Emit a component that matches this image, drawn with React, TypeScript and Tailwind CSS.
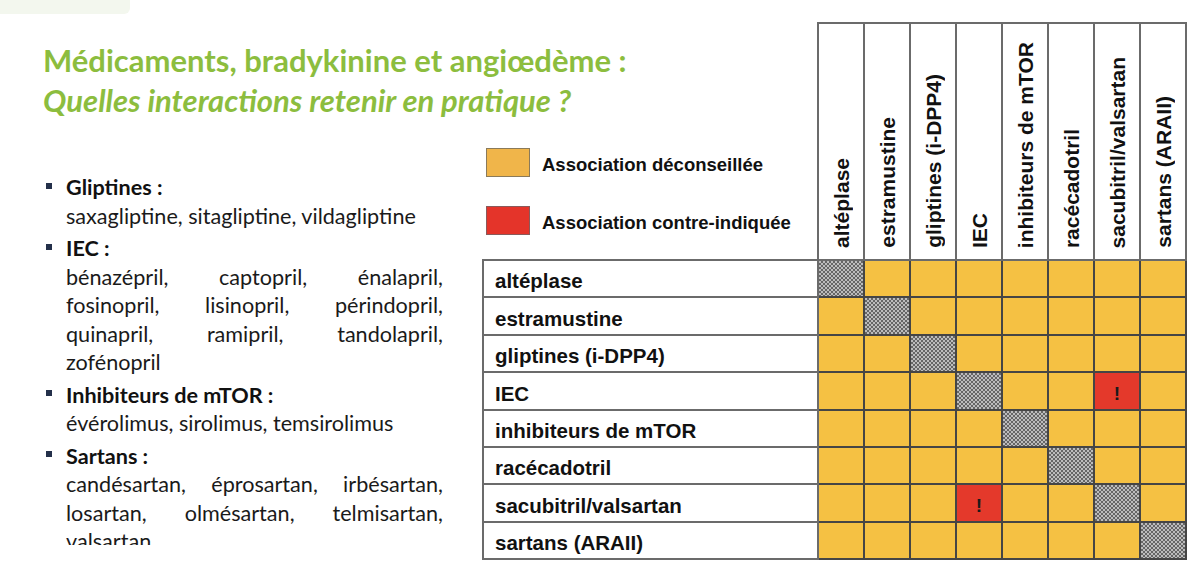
import React from "react";

const drugs = [
  "altéplase",
  "estramustine",
  "gliptines (i-DPP4)",
  "IEC",
  "inhibiteurs de mTOR",
  "racécadotril",
  "sacubitril/valsartan",
  "sartans (ARAII)",
];

const items: { h: string; lines: string[][] }[] = [
  { h: "Gliptines :", lines: [["saxagliptine, sitagliptine, vildagliptine"]] },
  {
    h: "IEC :",
    lines: [
      ["bénazépril,", "captopril,", "énalapril,"],
      ["fosinopril,", "lisinopril,", "périndopril,"],
      ["quinapril,", "ramipril,", "tandolapril,"],
      ["zofénopril"],
    ],
  },
  { h: "Inhibiteurs de mTOR :", lines: [["évérolimus, sirolimus, temsirolimus"]] },
  {
    h: "Sartans :",
    lines: [
      ["candésartan,", "éprosartan,", "irbésartan,"],
      ["losartan,", "olmésartan,", "telmisartan,"],
      ["valsartan"],
    ],
  },
];

function isRed(r: number, c: number) {
  return (r === 3 && c === 6) || (r === 6 && c === 3);
}

export default function App() {
  return (
    <div className="w-[1200px] h-[582px] bg-white flex overflow-hidden">
      {/* Left column */}
      <div className="w-[482px] shrink-0 flex flex-col font-['Lato',sans-serif]">
        <div className="h-[14px] w-[130px] bg-[#f3f7ee] rounded-br-[6px]" />
        <div className="mt-[26px] pl-[43px] whitespace-nowrap text-[#8cbd3e] font-bold text-[31px] leading-[40px]">
          <div>Médicaments, bradykinine et angiœdème :</div>
          <div className="italic">Quelles interactions retenir en pratique ?</div>
        </div>
        <div className="mt-[53px] ml-[46px] w-[397px] h-[372px] overflow-hidden text-[#1a1a1a] text-[21.6px]">
          {items.map((it, i) => (
            <div key={i} className={i === 0 ? "" : "mt-[4px]"}>
              <div className="flex items-center h-[28.5px] leading-[28.5px]">
                <span className="w-[6px] h-[6px] bg-[#24304a] mb-[3px] shrink-0" />
                <span className="ml-[14px] font-bold text-[#111]">{it.h}</span>
              </div>
              {it.lines.map((ln, j) => (
                <div
                  key={j}
                  className={
                    "ml-[20px] h-[28.5px] leading-[28.5px] whitespace-nowrap flex " +
                    (ln.length > 1 ? "justify-between" : "justify-start")
                  }
                >
                  {ln.map((w, k) => (
                    <span key={k}>{w}</span>
                  ))}
                </div>
              ))}
            </div>
          ))}
        </div>
      </div>

      {/* Right column */}
      <div className="flex-1 pt-[22px] font-['Liberation_Sans',Arial,sans-serif] text-[#111]">
        <div className="grid grid-cols-[337px_repeat(8,46px)] grid-rows-[239px_37px_38px_37px_38px_37px_37px_38px_37px]">
          {/* legend */}
          <div className="border-r-2 border-b-2 border-[#6b6b6b] pl-[4px] pt-[126px] flex flex-col gap-[29px]">
            <div className="flex items-center h-[29px] gap-[12px]">
              <span className="w-[44px] h-[29px] bg-[#f0b54a] border border-[#8a7a5a]" />
              <span className="mt-[5px] font-bold text-[18.5px] leading-none">Association déconseillée</span>
            </div>
            <div className="flex items-center h-[29px] gap-[12px]">
              <span className="w-[44px] h-[29px] bg-[#e4342a] border border-[#8a5a5a]" />
              <span className="mt-[5px] font-bold text-[18.5px] leading-none">Association contre-indiquée</span>
            </div>
          </div>
          {/* headers */}
          {drugs.map((d) => (
            <div
              key={"h" + d}
              className="border-t-2 border-r-2 border-b-2 border-[#6b6b6b] flex items-end justify-center pb-[11px]"
            >
              <span className="[writing-mode:vertical-rl] rotate-180 font-bold text-[21px] leading-none whitespace-nowrap">
                {d}
              </span>
            </div>
          ))}
          {/* rows */}
          {drugs.map((d, r) => (
            <React.Fragment key={"r" + d}>
              <div className="border-l-2 border-r-2 border-b-2 border-[#6b6b6b] flex items-center pl-[11px] pt-[6px] font-bold text-[20.5px] leading-none whitespace-nowrap">
                {d}
              </div>
              {drugs.map((_, c) =>
                r === c ? (
                  <div
                    key={c}
                    className="border-r-2 border-b-2 border-[#454545] bg-[#8f8f8f] bg-[image:repeating-conic-gradient(#666666_0%_25%,#bcbcbc_0%_50%)] bg-[length:4px_4px]"
                  />
                ) : isRed(r, c) ? (
                  <div
                    key={c}
                    className="border-r-2 border-b-2 border-[#454545] bg-[#e4392b] flex items-center justify-center pt-[4px] font-bold text-[19px] leading-none text-[#1a1a1a]"
                  >
                    !
                  </div>
                ) : (
                  <div key={c} className="border-r-2 border-b-2 border-[#454545] bg-[#f5c143]" />
                )
              )}
            </React.Fragment>
          ))}
        </div>
      </div>
    </div>
  );
}
